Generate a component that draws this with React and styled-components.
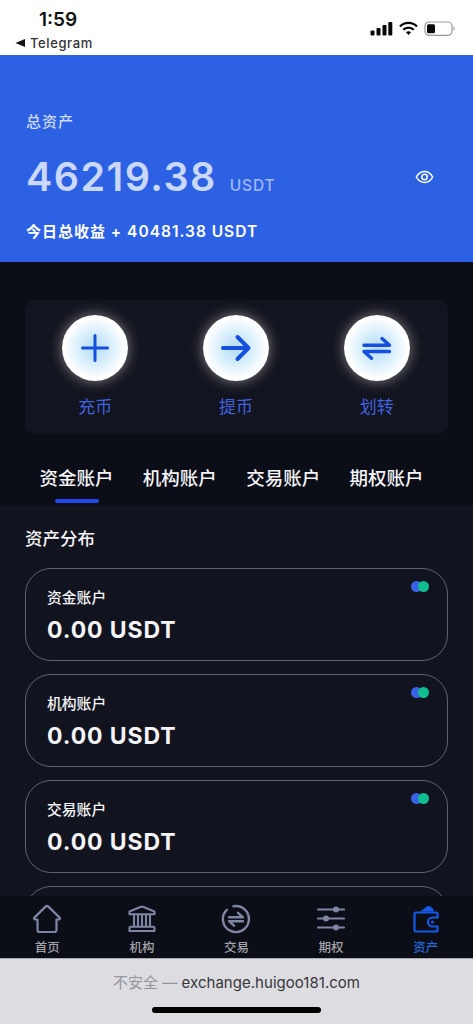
import * as React from 'react';
import styled, { createGlobalStyle } from 'styled-components';

const GlobalStyle = createGlobalStyle`
* { box-sizing: border-box; }
html, body { margin: 0; padding: 0; overflow: hidden; }
body {
    font-family: Inter, "Noto Sans CJK SC", sans-serif;
    background-color: #11131e;
}
svg { display: block; flex: none; }
`;

const Screen = styled.div`
width: 473px;
height: 1024px;
display: flex;
flex-direction: column;
overflow: hidden;
background-color: #11131e;
`;

const StatusBar = styled.header`
flex: none;
height: 55px;
padding: 0 17px 0 15px;
display: flex;
justify-content: space-between;
background-color: #fff;
color: #111;
`;

const StatusLeft = styled.div`
padding-top: 9px;
`;

const Clock = styled.div`
padding-left: 24px;
font-size: 19px;
line-height: 22px;
font-weight: 600;
`;

const BackLink = styled.div`
display: flex;
align-items: center;
gap: 5px;
margin-top: 4px;
font-size: 13px;
line-height: 16px;
font-weight: 500;
letter-spacing: 0.6px;
color: #333;
`;

const StatusIcons = styled.div`
display: flex;
align-items: flex-start;
padding-top: 21px;
gap: 6px;
`;

const Hero = styled.section`
flex: none;
height: 207px;
padding: 57px 39px 0 26px;
background-color: #2d61e4;
color: #fff;
letter-spacing: 1px;
`;

const HeroLabel = styled.div`
font-size: 15px;
line-height: 20px;
font-weight: 500;
color: #cfdcfb;
`;

const HeroRow = styled.div`
display: flex;
justify-content: space-between;
align-items: center;
height: 48px;
margin-top: 21px;
`;

const Total = styled.div`
display: flex;
align-items: baseline;
gap: 13px;
padding-top: 8px;
font-size: 39.5px;
font-weight: 600;
letter-spacing: 1.45px;
line-height: 48px;
color: #c9d8fb;
`;

const Unit = styled.span`
font-size: 15.5px;
font-weight: 500;
letter-spacing: 0.9px;
color: #a1b9f4;
`;

const Income = styled.div`
margin-top: 21px;
font-size: 15px;
line-height: 20px;
font-weight: 600;

span {
    font-size: 15.5px;
}
`;

const TopSection = styled.section`
flex: none;
height: 244px;
padding: 38px 25px 0;
background-color: #0b0d17;
`;

const ActionPanel = styled.div`
height: 134px;
padding: 15px 1px 0 0;
display: grid;
grid-template-columns: repeat(3, 1fr);
border-radius: 10px;
background-color: #12141f;
`;

const Action = styled.div`
display: flex;
flex-direction: column;
align-items: center;
font-size: 17px;
line-height: 22px;
color: #4163df;
`;

const ActionCircle = styled.div`
width: 66px;
height: 66px;
margin-bottom: 15px;
display: flex;
align-items: center;
justify-content: center;
border-radius: 50%;
background: radial-gradient(circle, #b4dcf8 0%, #d9effb 36%, #fff 66%);
box-shadow: 0 0 14px rgba(255, 250, 240, 0.48);
`;

const Tabs = styled.nav`
display: flex;
gap: 29.3px;
padding: 31px 0 0 14.5px;
`;

const Tab = styled.div`
display: flex;
flex-direction: column;
align-items: center;
font-size: 18.5px;
line-height: 26px;
font-weight: 500;
white-space: nowrap;
color: #f4f4f8;

&::after {
    content: "";
    width: 44px;
    height: 4px;
    margin-top: 8px;
    border-radius: 2px;
    background-color: ${(props) => (props.$active ? '#1f48ee' : 'transparent')};
}
`;

const Distribution = styled.section`
flex: none;
height: 390px;
padding: 21px 25px 0;
overflow: hidden;
background-color: #11131e;
color: #f5f5f8;
`;

const SectionTitle = styled.h2`
margin: 0 0 17px;
font-size: 17.5px;
line-height: 24px;
font-weight: 500;
`;

const AccountCard = styled.div`
display: flex;
justify-content: space-between;
height: 93px;
margin-bottom: 13px;
padding: 12px 18px 0 21px;
border: 1px solid #60616a;
border-radius: 26px;
`;

const AccountName = styled.div`
margin-top: 7px;
font-size: 14.8px;
line-height: 20px;
font-weight: 500;
`;

const Balance = styled.div`
margin-top: 9px;
font-size: 23px;
line-height: 26px;
font-weight: 650;
letter-spacing: 0.9px;
`;

const Dots = styled.div`
display: flex;
height: 11px;

&::before, &::after {
    content: "";
    width: 11px;
    height: 11px;
    border-radius: 50%;
    background-color: #3a62e6;
}
&::after {
    margin-left: -4px;
    background-color: #10bd8e;
}
`;

const BottomNav = styled.nav`
flex: none;
height: 62px;
padding-top: 8px;
display: grid;
grid-template-columns: repeat(5, 1fr);
background-color: #0b0d17;
`;

const NavItem = styled.div`
display: flex;
flex-direction: column;
align-items: center;
gap: 5px;
font-size: 12.5px;
line-height: 17px;
font-weight: 500;
color: ${(props) => (props.$active ? '#2468da' : '#a4a5ab')};

svg {
    color: ${(props) => (props.$active ? '#1658e8' : '#7e86a3')};
}
`;

const BrowserBar = styled.footer`
flex: none;
height: 66px;
border-top: 1px solid #a9aab2;
background-color: #dcdce1;
display: flex;
flex-direction: column;
align-items: center;
`;

const Address = styled.div`
margin-top: 14px;
font-size: 15px;
line-height: 20px;
letter-spacing: 0.03px;
color: #37373b;
white-space: pre;

span { color: #95959b; }
`;

const HomeIndicator = styled.div`
width: 169px;
height: 6px;
margin-top: 14px;
border-radius: 3px;
background-color: #000;
`;

const strokeProps = {
    fill: 'none',
    stroke: 'currentColor',
    strokeLinecap: 'round',
    strokeLinejoin: 'round',
};

const Signal = () => (
    <svg width="23" height="15" viewBox="0 0 23 15" fill="#080808">
        <rect x="0.5" y="9.5" width="4" height="5" rx="1" />
        <rect x="6.5" y="7" width="4" height="7.5" rx="1" />
        <rect x="12.5" y="4" width="4" height="10.5" rx="1" />
        <rect x="18.3" y="1" width="4" height="13.5" rx="1" />
    </svg>
);

const Wifi = () => (
    <svg width="19" height="15" viewBox="0 0 19 15" fill="none" stroke="#080808" strokeWidth="2.3">
        <path d="M1 5.5C5.7.7 13.3.7 18 5.5" />
        <path d="M4.2 8.8c2.9-3 7.7-3 10.6 0" />
        <path d="M6.9 11.2c1.5-1.4 3.7-1.4 5.2 0L9.5 14z" fill="#080808" stroke="none" />
    </svg>
);

const Battery = () => (
    <svg width="32" height="15" viewBox="0 0 32 15">
        <rect x="1" y="1" width="27" height="13.3" rx="4" fill="none" stroke="#999" strokeWidth="1.2" />
        <rect x="3" y="3.2" width="8" height="9" rx="1.5" fill="#080808" />
        <path d="M29.5 5.6c1.6.6 1.6 3.6 0 4.2z" fill="#999" />
    </svg>
);

const Eye = () => (
    <svg width="19" height="16" viewBox="0 0 19 16" {...strokeProps} strokeWidth="1.5">
        <path d="M1.3 8C3.3 4.5 6 2.5 9.5 2.5S15.7 4.5 17.7 8c-2 3.5-4.7 5.5-8.2 5.5S3.3 11.5 1.3 8z" />
        <circle cx="9.5" cy="8" r="2.7" />
    </svg>
);

const PlusIcon = () => (
    <svg width="30" height="30" viewBox="0 0 30 30" {...strokeProps} stroke="#1450dc" strokeWidth="3">
        <path d="M15 2.5v25M2.5 15h25" />
    </svg>
);

const ArrowIcon = () => (
    <svg width="32" height="30" viewBox="0 0 32 30" {...strokeProps} stroke="#1450dc" strokeWidth="4">
        <path d="M3 15h25M17.5 4L28.5 15l-11 11" />
    </svg>
);

const TransferIcon = () => (
    <svg width="32" height="26" viewBox="0 0 32 26" {...strokeProps} stroke="#1450dc" strokeWidth="3.4">
        <path d="M3 10.3h25.500l-7.500-6.800M28.500 16.500H3l7.500 6.800" />
    </svg>
);

const HomeIcon = () => (
    <svg width="30" height="30" viewBox="0 0 30 30" {...strokeProps} strokeWidth="2.2">
        <path d="M5.500 15.500H3.200c-1 0-1.500-1.200-.8-1.900L13.600 2.600a2 2 0 0 1 2.800 0l11.200 11c.7.700.2 1.900-.8 1.900h-2.300V26a2 2 0 0 1-2 2h-15a2 2 0 0 1-2-2z" />
    </svg>
);

const BankIcon = () => (
    <svg width="30" height="30" viewBox="0 0 30 30" {...strokeProps} strokeWidth="2.1">
        <path d="M2.500 7.500L14 2.800h2l11.500 4.700v2.800h-25z" />
        <path d="M7 11v11M11 11v11M15 11v11M19 11v11M23 11v11M3.500 22.800h23a1 1 0 0 1 1 1V27h-25v-3.200a1 1 0 0 1 1-1z" />
    </svg>
);

const TradeIcon = () => (
    <svg width="30" height="30" viewBox="0 0 30 30" {...strokeProps} strokeWidth="2.4">
        <path d="M12.500 2.300A13 13 0 1 1 5.800 5.800" />
        <path d="M8 13.300h14l-5-4.500M22 17.200H8l5 4.500" />
    </svg>
);

const OptionsIcon = () => (
    <svg width="30" height="30" viewBox="0 0 30 30" {...strokeProps} strokeWidth="2.2">
        <path d="M2 5.500h26M2 14.500h26M2 23.500h26" />
        <g fill="currentColor" stroke="none">
            <circle cx="20" cy="5.500" r="3" />
            <circle cx="10" cy="14.500" r="3" />
            <circle cx="20" cy="23.500" r="3" />
        </g>
    </svg>
);

const WalletIcon = () => (
    <svg width="30" height="30" viewBox="0 0 30 30" {...strokeProps} strokeWidth="2.2">
        <path d="M26.500 13V9.500a1 1 0 0 0-1-1h-21a1 1 0 0 0-1 1v17a1 1 0 0 0 1 1h21a1 1 0 0 0 1-1v-4" />
        <path d="M26.500 13.500h-5a4.500 4.500 0 0 0 0 9h5" />
        <circle cx="21.500" cy="18" r="1.500" fill="currentColor" stroke="none" />
        <path d="M9 7.500l7.500-5.300a2 2 0 0 1 2.300 0L22.500 5v2.500z" fill="currentColor" stroke="none" />
    </svg>
);

const actions = [
    { label: '充币', Icon: PlusIcon },
    { label: '提币', Icon: ArrowIcon },
    { label: '划转', Icon: TransferIcon },
];

const tabs = ['资金账户', '机构账户', '交易账户', '期权账户'];
const accounts = tabs.slice(0, 3);

const navItems = [
    { label: '首页', Icon: HomeIcon },
    { label: '机构', Icon: BankIcon },
    { label: '交易', Icon: TradeIcon },
    { label: '期权', Icon: OptionsIcon },
    { label: '资产', Icon: WalletIcon },
];

const App = () => {
    return (
        <>
        <GlobalStyle />
        <Screen>
            <StatusBar>
                <StatusLeft>
                    <Clock>1:59</Clock>
                    <BackLink>
                        <svg width="10" height="8" viewBox="0 0 10 8"><path d="M.5 4L10 0v8z" fill="#111" /></svg>
                        Telegram
                    </BackLink>
                </StatusLeft>
                <StatusIcons>
                    <Signal />
                    <Wifi />
                    <Battery />
                </StatusIcons>
            </StatusBar>

            <Hero>
                <HeroLabel>总资产</HeroLabel>
                <HeroRow>
                    <Total>46219.38<Unit>USDT</Unit></Total>
                    <Eye />
                </HeroRow>
                <Income>今日总收益 <span>+ 40481.38 USDT</span></Income>
            </Hero>

            <TopSection>
                <ActionPanel>
                    {actions.map(({ label, Icon }) => (
                        <Action key={label}>
                            <ActionCircle><Icon /></ActionCircle>
                            {label}
                        </Action>
                    ))}
                </ActionPanel>
                <Tabs>
                    {tabs.map((tab, i) => (
                        <Tab key={tab} $active={i === 0}>{tab}</Tab>
                    ))}
                </Tabs>
            </TopSection>

            <Distribution>
                <SectionTitle>资产分布</SectionTitle>
                {accounts.map((name) => (
                    <AccountCard key={name}>
                        <div>
                            <AccountName>{name}</AccountName>
                            <Balance>0.00 USDT</Balance>
                        </div>
                        <Dots />
                    </AccountCard>
                ))}
                {/* only the top edge shows above the nav */}
                <AccountCard />
            </Distribution>

            <BottomNav>
                {navItems.map(({ label, Icon }) => (
                    <NavItem key={label} $active={label === '资产'}>
                        <Icon />
                        {label}
                    </NavItem>
                ))}
            </BottomNav>

            <BrowserBar>
                <Address><span>不安全 — </span>exchange.huigoo181.com</Address>
                <HomeIndicator />
            </BrowserBar>
        </Screen>
        </>
    )
}

export default App;
